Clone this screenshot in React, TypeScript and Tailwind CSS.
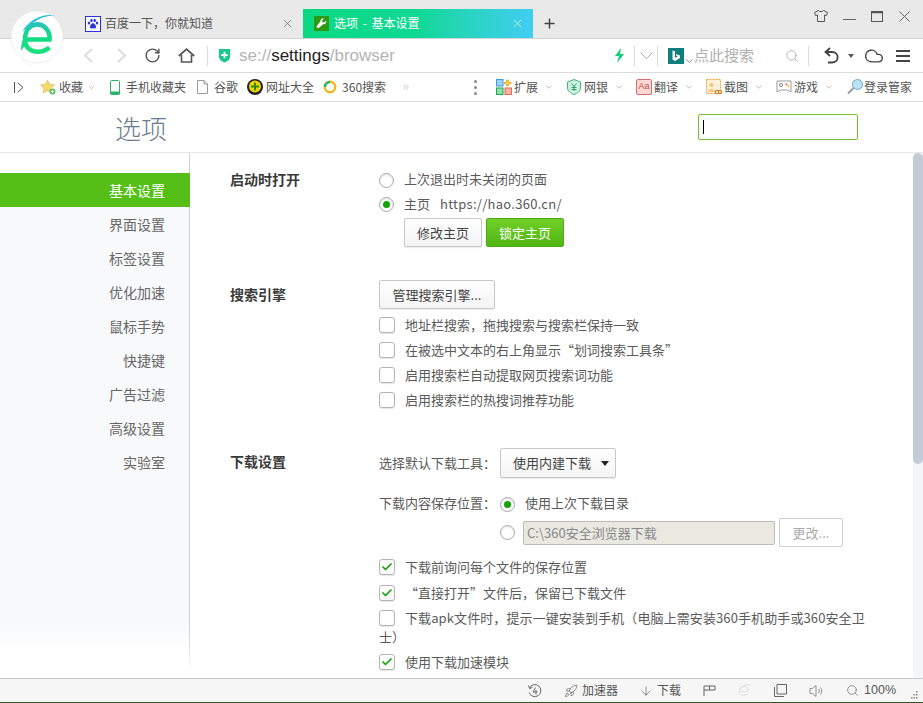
import { ChevronDown, Search, Cloud, X, Plus, Check, ArrowDown, Rocket, RotateCw, ChevronsRight } from 'lucide-react';

const SIDE_ITEMS = ['基本设置', '界面设置', '标签设置', '优化加速', '鼠标手势', '快捷键', '广告过滤', '高级设置', '实验室'];

function Logo() {
  return (
    <svg width="70" height="65" viewBox="0 0 70 65" fill="none" className="absolute left-[5px] top-[5px] z-10">
      <defs>
        <linearGradient id="egrad" x1="0" y1="0" x2="0" y2="1">
          <stop offset="0" stopColor="#27c5b4" />
          <stop offset="0.5" stopColor="#10dd84" />
          <stop offset="1" stopColor="#18e07e" />
        </linearGradient>
      </defs>
      <path d="M17 54 L25 60.5 L28 57.5 Z" fill="#fff" stroke="#e2e2e2" strokeWidth="0.5" />
      <circle cx="32" cy="32" r="26" fill="#fff" stroke="#e4e4e4" strokeWidth="0.6" />
      <path d="M22 34.5 H44.5 C45.5 25 38 18.5 31 19.5 C23 20.5 20 28 20 35 C20 43 27 47 33 46.8 C38 46.6 41.5 45 44.5 42.5" stroke="url(#egrad)" strokeWidth="4.6" />
      <path d="M17 27 C24 15 37 8 50 10.5 C40 10.5 32 14 26 20 C22 23 19 25 17 27 Z" fill="#2cc2d4" />
      <path d="M16 46 C16 39 17.5 34 20 30 L22 37 C20.5 40 18 43 16 46 Z" fill="#14dc88" />
    </svg>
  );
}

function Radio({ on }: { on?: boolean }) {
  return (
    <span className="flex h-[15px] w-[15px] shrink-0 items-center justify-center rounded-full border border-[#a8a8a8] bg-white shadow-[inset_0_1px_2px_rgba(0,0,0,0.12)]">
      {on && <span className="h-[7px] w-[7px] rounded-full bg-[#16a308]" />}
    </span>
  );
}

function CheckBox({ on }: { on?: boolean }) {
  return (
    <span className="flex h-[16px] w-[16px] shrink-0 items-center justify-center rounded-[3px] border border-[#b4b4b4] bg-white shadow-[0_1px_1px_rgba(0,0,0,0.1)]">
      {on && <Check size={12} strokeWidth={3.5} className="text-[#16a308]" />}
    </span>
  );
}

function CheckRow({ on, children }: { on?: boolean; children: React.ReactNode }) {
  return (
    <div className="flex h-[25px] items-center gap-[10px]">
      <CheckBox on={on} />
      <span>{children}</span>
    </div>
  );
}

function GrayButton({ className, children }: { className?: string; children: React.ReactNode }) {
  return (
    <div className={`flex items-center justify-center rounded-[2px] border border-[#c8c8c8] bg-gradient-to-b from-white to-[#f4f4f4] text-[#444] shadow-[0_1px_1px_rgba(0,0,0,0.08)] ${className ?? ''}`}>
      {children}
    </div>
  );
}

function Tabs() {
  return (
    <div className="relative flex h-[39px] border-b border-[#d2d2d2] bg-[#e9e9e9] pt-[9px]">
      <div className="ml-[85px] flex h-[29px] w-[218px] items-center text-[#555]">
        <span className="flex h-[16px] w-[16px] items-center justify-center border border-[#2932e1] bg-white">
          <svg width="12" height="12" viewBox="0 0 12 12" fill="#2932e1">
            <ellipse cx="2" cy="5" rx="1.2" ry="1.6" />
            <ellipse cx="4.5" cy="2.5" rx="1.2" ry="1.7" />
            <ellipse cx="7.7" cy="2.5" rx="1.2" ry="1.7" />
            <ellipse cx="10" cy="5" rx="1.2" ry="1.6" />
            <path d="M6 5.2 C4.4 5.2 2.6 8 3 9.6 C3.5 11 5 10.2 6 10.2 C7 10.2 8.5 11 9 9.6 C9.4 8 7.6 5.2 6 5.2 Z" />
          </svg>
        </span>
        <span className="ml-[4px] pb-[2px] text-[12px]">百度一下，你就知道</span>
        <X size={13} strokeWidth={1.3} className="ml-auto mr-[9px] text-[#666]" />
      </div>
      <div className="flex h-[29px] w-[230px] items-center bg-gradient-to-r from-[#0ad981] via-[#10d895] to-[#41cdf4] pl-[11px] text-white">
        <span className="flex h-[15px] w-[15px] items-center justify-center bg-[#2c9a12]">
          <svg width="11" height="11" viewBox="0 0 12 12" fill="#fff">
            <path d="M11 3 L8.8 5 L7 4.6 L6.6 2.8 L8.8 0.8 C6.8 0 4.6 1.4 4.8 3.8 L0.8 8.6 C0 9.8 1.8 11.6 3 10.8 L7.8 6.9 C10 7.2 11.8 5 11 3 Z" />
          </svg>
        </span>
        <span className="ml-[5px] pb-[2px] text-[12px] [word-spacing:2px]">选项 - 基本设置</span>
        <X size={13} strokeWidth={1.3} className="ml-auto mr-[9px]" />
      </div>
      <Plus size={15} strokeWidth={2.4} className="ml-[9px] mt-[7px] text-[#444]" />
      <div className="absolute left-[814px] top-[10px] flex items-start text-[#555]">
        <svg width="14" height="12" viewBox="0 0 14 12" fill="none" stroke="#555" strokeWidth="1">
          <path d="M4.5 0.5 C5.5 2 8.5 2 9.5 0.5 L13.5 2.5 L12.5 5.5 L10.5 5 V11.5 H3.5 V5 L1.5 5.5 L0.5 2.5 Z" />
        </svg>
        <svg width="13" height="12" viewBox="0 0 13 12" className="ml-[15px]"><path d="M0 9.5 H13" stroke="#666" strokeWidth="1" /></svg>
        <svg width="12" height="11" viewBox="0 0 12 11" fill="none" className="ml-[15px] mt-px">
          <rect x="0.5" y="0.5" width="11" height="10" stroke="#555" />
          <path d="M0 1.5 H12" stroke="#555" strokeWidth="1.5" />
        </svg>
        <svg width="11" height="11" viewBox="0 0 11 11" className="ml-[16px] mt-px"><path d="M0.5 0.5 L10.5 10.5 M10.5 0.5 L0.5 10.5" stroke="#666" strokeWidth="1" /></svg>
      </div>
    </div>
  );
}

function NavBar() {
  return (
    <div className="flex h-[34px] items-center border-b border-[#dcdcdc] bg-white">
      <svg width="10" height="15" viewBox="0 0 10 15" className="ml-[83px]"><path d="M9 1 L2 7.5 L9 14" fill="none" stroke="#dcdcdc" strokeWidth="1.8" /></svg>
      <svg width="10" height="15" viewBox="0 0 10 15" className="ml-[24px]"><path d="M1 1 L8 7.5 L1 14" fill="none" stroke="#dcdcdc" strokeWidth="1.8" /></svg>
      <RotateCw size={17} strokeWidth={2} className="ml-[17px] text-[#555]" />
      <svg width="17" height="15" viewBox="0 0 17 15" fill="none" stroke="#555" className="ml-[17px]">
        <path d="M0.8 8 L8.5 1.2 L16.2 8" strokeWidth="1.8" />
        <path d="M3.5 7 V14 H13.5 V7" strokeWidth="1.6" />
      </svg>
      <span className="ml-[12px] h-[20px] w-px bg-[#dcdcdc]" />
      <svg width="13" height="15" viewBox="0 0 14 16" className="ml-[10px]">
        <path d="M1 1 H13 V9 C13 12 10 14.5 7 15.5 C4 14.5 1 12 1 9 Z" fill="#16c889" />
        <path d="M6 4 H8 V6.5 H10.5 V8.5 H8 V11 H6 V8.5 H3.5 V6.5 H6 Z" fill="#fff" />
      </svg>
      <span className="ml-[8px] w-[156px] whitespace-nowrap font-['Liberation_Sans',sans-serif] text-[17px] text-[#b4b4b4]">
        se://<span className="text-[#222]">settings</span>/browser
      </span>
      <svg width="11" height="15" viewBox="0 0 11 15" className="ml-[219px]">
        <path d="M7 0 L1 8 H5 L3 15 L10 6 H6 Z" fill="#12cf78" />
      </svg>
      <span className="ml-[9px] h-[20px] w-px bg-[#dcdcdc]" />
      <svg width="13" height="8" viewBox="0 0 13 8" className="ml-[5px]"><path d="M0.5 0.5 L6.5 6.5 L12.5 0.5" fill="none" stroke="#aaa" /></svg>
      <span className="ml-[4px] h-[20px] w-px bg-[#dcdcdc]" />
      <svg width="16" height="16" viewBox="0 0 16 16" className="ml-[10px]">
        <rect width="16" height="16" fill="#0f7f7d" />
        <path d="M4.5 2.5 L7 3.3 V9.8 L9.8 8.4 L8.4 7.7 L7.8 6 L12 7.5 V10 L7 13 L4.5 11.6 Z" fill="#fff" />
      </svg>
      <svg width="7" height="4" viewBox="0 0 7 4" className="ml-[2px] mt-[11px]"><path d="M0.5 0.5 L3.5 3.5 L6.5 0.5" fill="none" stroke="#999" /></svg>
      <span className="ml-px w-[60px] text-[15px] text-[#b0b0b0]">点此搜索</span>
      <Search size={14} strokeWidth={1.2} className="ml-[31px] text-[#999]" />
      <span className="ml-[9px] h-[20px] w-px bg-[#dcdcdc]" />
      <svg width="15" height="17" viewBox="0 0 15 17" fill="none" stroke="#444" strokeWidth="1.8" className="ml-[15px]">
        <path d="M1.5 5 H8 C15.5 5 15.5 15.5 8 15.5 H4" />
        <path d="M6 1 L1.5 5 L6 9" />
      </svg>
      <svg width="6" height="4" viewBox="0 0 6 4" className="ml-[9px]"><path d="M0 0 H6 L3 4 Z" fill="#555" /></svg>
      <Cloud size={20} strokeWidth={1.7} className="ml-[10px] text-[#444]" />
      <svg width="14" height="12" viewBox="0 0 14 12" className="ml-[12px]"><path d="M0 1 H14 M0 6 H14 M0 11 H14" stroke="#444" strokeWidth="2" /></svg>
    </div>
  );
}

function ExtTool({ icon, label, last }: { icon: React.ReactNode; label: string; last?: boolean }) {
  return (
    <div className="flex w-[70px] shrink-0 items-center">
      {icon}
      <span className={`whitespace-nowrap ${last ? '' : 'ml-[2px]'}`}>{label}</span>
      {!last && <ChevronDown size={10} strokeWidth={1} className="ml-[6px] text-[#666]" />}
    </div>
  );
}

function Bookmarks() {
  return (
    <div className="flex h-[29px] items-center border-b border-[#dcdcdc] bg-white text-[12px] text-[#555]">
      <div className="flex w-[474px] shrink-0 items-center">
        <svg width="10" height="11" viewBox="0 0 10 11" fill="none" stroke="#555" className="ml-[14px]"><path d="M0.5 0 V11 M4 1 L9 5.5 L4 10" /></svg>
        <svg width="16" height="16" viewBox="0 0 16 16" className="ml-[16px]">
          <path d="M7.5 1 L9.6 5.4 L14.5 6 L11 9.3 L11.9 14 L7.5 11.7 L3.1 14 L4 9.3 L0.5 6 L5.4 5.4 Z" fill="#f7d86b" stroke="#d3b04a" strokeWidth="0.6" />
          <circle cx="12.5" cy="12.5" r="3" fill="#62c26a" />
          <path d="M12.5 11 V14 M11 12.5 H14" stroke="#fff" strokeWidth="0.8" />
        </svg>
        <span className="ml-[3px]">收藏</span>
        <ChevronDown size={9} strokeWidth={1} className="ml-[4px] text-[#666]" />
        <svg width="10" height="15" viewBox="0 0 10 15" className="ml-[14px]">
          <rect x="0.5" y="0.5" width="9" height="14" rx="1" fill="#fff" stroke="#2cb36a" />
          <rect x="0.5" y="11.5" width="9" height="3" fill="#2cb36a" />
        </svg>
        <span className="ml-[6px]">手机收藏夹</span>
        <svg width="11" height="14" viewBox="0 0 11 14" fill="none" stroke="#999" className="ml-[11px]"><path d="M0.5 0.5 H7 L10.5 4 V13.5 H0.5 Z M7 0.5 V4 H10.5" /></svg>
        <span className="ml-[6px]">谷歌</span>
        <svg width="16" height="16" viewBox="0 0 16 16" className="ml-[9px]">
          <circle cx="8" cy="8" r="8" fill="#222" />
          <circle cx="8" cy="7.5" r="6" fill="#f2d500" />
          <path d="M7 3.5 H9 V6.5 H12 V8.5 H9 V11.5 H7 V8.5 H4 V6.5 H7 Z" fill="#2f8a12" />
        </svg>
        <span className="ml-[3px]">网址大全</span>
        <svg width="14" height="14" viewBox="0 0 14 14" className="ml-[9px]">
          <circle cx="7" cy="7" r="5.2" fill="none" stroke="#f0b81c" strokeWidth="2.4" />
          <path d="M2 7 A5 5 0 0 1 7 2" fill="none" stroke="#2fb866" strokeWidth="2.4" />
        </svg>
        <span className="ml-[5px]">360搜索</span>
        <ChevronsRight size={10} strokeWidth={1} className="ml-[15px] text-[#777]" />
      </div>
      <span className="flex flex-col gap-[3px]">
        <span className="h-[3px] w-[3px] rounded-full bg-[#888]" />
        <span className="h-[3px] w-[3px] rounded-full bg-[#888]" />
        <span className="h-[3px] w-[3px] rounded-full bg-[#888]" />
      </span>
      <div className="ml-[19px] flex items-center">
        <ExtTool
          label="扩展"
          icon={
            <svg width="16" height="16" viewBox="0 0 16 16">
              <rect x="0.5" y="0.5" width="6.5" height="6.5" fill="#9ad4f7" stroke="#3a9be0" />
              <rect x="0.5" y="9" width="6.5" height="6.5" fill="#8fe0a8" stroke="#1da55a" />
              <rect x="9" y="9" width="6.5" height="6.5" fill="#f7b3a8" stroke="#e46a52" />
              <path d="M10.5 1 H12.5 V3 H15 V5 H12.5 V7 H10.5 V5 H8.5 V3 H10.5 Z" fill="#f9d24a" stroke="#d49a10" strokeWidth="0.6" />
            </svg>
          }
        />
        <ExtTool
          label="网银"
          icon={
            <svg width="16" height="16" viewBox="0 0 16 16">
              <path d="M8 0.5 L14.5 3 V9 C14.5 12 11 14.5 8 15.5 C5 14.5 1.5 12 1.5 9 V3 Z" fill="#cdf1de" stroke="#3cb57f" />
              <path d="M5.5 4.5 L8 7.5 L10.5 4.5 M8 7.5 V12 M5.5 8.5 H10.5 M5.5 10.5 H10.5" stroke="#1f9a62" strokeWidth="0.9" fill="none" />
            </svg>
          }
        />
        <ExtTool
          label="翻译"
          icon={
            <span className="flex h-[16px] w-[16px] items-center justify-center rounded-[2px] border border-[#d76a6a] bg-[#fbd9d6] font-['Liberation_Sans',sans-serif] text-[9px] text-[#c44]">Aa</span>
          }
        />
        <ExtTool
          label="截图"
          icon={
            <svg width="16" height="16" viewBox="0 0 16 16">
              <rect x="0.5" y="0.5" width="14" height="14" fill="#fdf0d8" stroke="#efa53a" strokeDasharray="2 1" />
              <circle cx="5.5" cy="6" r="2" fill="#f2c37a" />
              <path d="M2 13 C3 9 8 9 9 13 Z" fill="#f2c37a" />
              <circle cx="11" cy="13" r="1.8" fill="none" stroke="#c9751a" />
              <circle cx="14" cy="13" r="1.8" fill="none" stroke="#c9751a" />
            </svg>
          }
        />
        <ExtTool
          label="游戏"
          icon={
            <svg width="16" height="16" viewBox="0 0 16 16">
              <path d="M1 2 H15 V13 L11.5 11 H4.5 L1 13 Z" fill="#fff" stroke="#999" />
              <circle cx="5" cy="6" r="1.6" fill="none" stroke="#888" />
              <rect x="9.5" y="4.5" width="1.8" height="1.8" fill="#e25a4a" />
              <rect x="11.5" y="6.5" width="1.8" height="1.8" fill="#f0b81c" />
            </svg>
          }
        />
        <ExtTool
          last
          label="登录管家"
          icon={
            <svg width="18" height="18" viewBox="0 0 18 18">
              <circle cx="11.5" cy="6.5" r="5" fill="#bfe1f5" stroke="#6aa9cf" />
              <path d="M7.5 10 L2 15.5" stroke="#999" strokeWidth="2" />
            </svg>
          }
        />
      </div>
    </div>
  );
}

function StatusBar() {
  return (
    <div className="flex h-[25px] items-center border-t border-b border-t-[#c8c8c8] border-b-[#2c5a22] bg-[#f6f6f6] text-[12px] text-[#555]">
      <svg width="14" height="14" viewBox="0 0 14 14" fill="none" stroke="#555" strokeWidth="0.9" className="ml-[528px]">
        <path d="M1.5 4 A6 6 0 1 1 1.2 8.5" />
        <path d="M0.5 1.5 L1.5 4.5 L4.5 3.5" />
        <path d="M7.5 3.5 L5 8 H9.5 M8 6 V10.5" />
      </svg>
      <Rocket size={14} strokeWidth={1.1} className="ml-[22px] text-[#555]" />
      <span className="ml-[4px] pb-[2px]">加速器</span>
      <ArrowDown size={14} strokeWidth={1.1} className="ml-[21px] text-[#555]" />
      <span className="ml-[4px] pb-[2px]">下载</span>
      <svg width="13" height="11" viewBox="0 0 13 11" fill="none" stroke="#555" strokeWidth="0.9" className="ml-[22px]">
        <path d="M1 11 V1 H12 V5 H6.5 V1 M1 5 H6.5" />
      </svg>
      <svg width="14" height="14" viewBox="0 0 14 14" fill="none" stroke="#dedede" strokeWidth="1" className="ml-[21px]">
        <path d="M2 7.5 H11 C11.5 4 9 2 6.5 2.5 C3.5 3 2 6 2 8 C2.5 11 6 12.5 10.5 10" />
        <path d="M2 5 C5 2 9 0.5 13 1" />
      </svg>
      <svg width="13" height="13" viewBox="0 0 13 13" fill="none" stroke="#555" strokeWidth="0.9" className="ml-[23px]">
        <path d="M3 0.5 H12.5 V10 H3 Z M0.5 3 V12.5 H10" />
      </svg>
      <svg width="14" height="14" viewBox="0 0 14 14" fill="none" stroke="#888" strokeWidth="0.9" className="ml-[22px]">
        <path d="M1 4.5 H3.5 L7 1.5 V12.5 L3.5 9.5 H1 Z M9.5 5 C10.5 6 10.5 8 9.5 9 M11.5 3.5 C13 5.5 13 8.5 11.5 10.5" />
      </svg>
      <Search size={13} strokeWidth={1.1} className="ml-[23px] text-[#555]" />
      <span className="ml-[5px] font-['Liberation_Sans',sans-serif] text-[12.5px]">100%</span>
      <svg width="8" height="8" viewBox="0 0 8 8" fill="#888" className="ml-[15px] mt-[9px]">
        <rect x="5" y="0" width="1.5" height="1.5" />
        <rect x="2.5" y="3" width="1.5" height="1.5" />
        <rect x="5" y="3" width="1.5" height="1.5" />
        <rect x="0" y="6" width="1.5" height="1.5" />
        <rect x="2.5" y="6" width="1.5" height="1.5" />
        <rect x="5" y="6" width="1.5" height="1.5" />
      </svg>
    </div>
  );
}

function Sidebar() {
  return (
    <div className="flex w-[190px] shrink-0">
      <div className="h-full w-[189px] bg-[linear-gradient(to_bottom,#ffffff_3.8%,#f8f9fb_3.8%,#f8f9fb_89%,#ffffff_96%)] pt-[20px] text-[14px]">
        {SIDE_ITEMS.map((item, i) => (
          <div
            key={item}
            className={`relative flex h-[34px] items-center justify-end pr-[24px] ${i === 0 ? '-mr-px bg-[#55bf17] pr-[25px] text-white' : 'text-[#666]'}`}
          >
            {item}
          </div>
        ))}
      </div>
      <div className="h-[519px] w-px bg-[linear-gradient(to_bottom,#d0d0d0_92%,#ffffff)]" />
    </div>
  );
}

function Settings() {
  return (
    <div className="relative flex-1 overflow-hidden bg-white pl-[40px] pt-[16px] text-[13px] text-[#5a5a5a]">
      <div className="flex">
        <div className="flex h-[22px] w-[149px] items-center pb-[2px] text-[14px] font-bold text-[#3a3a3a]">启动时打开</div>
        <div>
          <div className="flex h-[22px] items-center gap-[10px]"><Radio /><span className="pb-[2px]">上次退出时未关闭的页面</span></div>
          <div className="mt-[2px] flex h-[22px] items-center gap-[10px]">
            <Radio on />
            <span>主页</span>
            <span className="tracking-[0.27px]">https://hao.360.cn/</span>
          </div>
          <div className="ml-[25px] mt-[3px] flex gap-[4px]">
            <GrayButton className="h-[29px] w-[78px]">修改主页</GrayButton>
            <div className="flex h-[29px] w-[78px] items-center justify-center rounded-[2px] border border-[#4ea916] bg-gradient-to-b from-[#6fd028] to-[#52b510] text-white">锁定主页</div>
          </div>
        </div>
      </div>

      <div className="mt-[33px] flex">
        <div className="flex h-[29px] w-[149px] items-center text-[14px] font-bold text-[#3a3a3a]">搜索引擎</div>
        <div>
          <GrayButton className="h-[29px] w-[116px]">管理搜索引擎...</GrayButton>
          <div className="mt-[3px]">
            <CheckRow>地址栏搜索，拖拽搜索与搜索栏保持一致</CheckRow>
            <CheckRow>在被选中文本的右上角显示“划词搜索工具条”</CheckRow>
            <CheckRow>启用搜索栏自动提取网页搜索词功能</CheckRow>
            <CheckRow>启用搜索栏的热搜词推荐功能</CheckRow>
          </div>
        </div>
      </div>

      <div className="mt-[36px] flex">
        <div className="flex h-[29px] w-[149px] items-center pb-[2px] text-[14px] font-bold text-[#3a3a3a]">下载设置</div>
        <div className="w-[490px]">
          <div className="flex items-center">
            <span className="w-[121px]">选择默认下载工具：</span>
            <GrayButton className="h-[30px] w-[116px] !justify-start pl-[12px]">
              使用内建下载
              <svg width="8" height="5" viewBox="0 0 8 5" className="ml-[10px]"><path d="M0 0 H8 L4 5 Z" fill="#222" /></svg>
            </GrayButton>
          </div>
          <div className="mt-[15px] flex h-[22px] items-center">
            <span className="w-[121px] pb-[2px]">下载内容保存位置：</span>
            <Radio on />
            <span className="ml-[10px] pb-[2px]">使用上次下载目录</span>
          </div>
          <div className="mt-[3px] flex h-[29px] items-center pl-[121px]">
            <Radio />
            <div className="ml-[8px] flex h-[24px] w-[252px] items-center rounded-[2px] border border-[#bcbcbc] bg-[#e9e9e2] pl-[3px] text-[#888]">C:\360安全浏览器下载</div>
            <div className="ml-[4px] flex h-[29px] w-[64px] items-center justify-center rounded-[2px] border border-[#cfcfcf] text-[#aaa]">更改...</div>
          </div>
          <div className="mt-[7px]">
            <CheckRow on>下载前询问每个文件的保存位置</CheckRow>
            <div className="mt-px">
              <CheckRow on>“直接打开”文件后，保留已下载文件</CheckRow>
            </div>
            <div className="mt-[3px] flex flex-wrap items-start leading-[19px] tracking-[0.1px]">
              <p className="indent-[26px]">
                下载apk文件时，提示一键安装到手机（电脑上需安装360手机助手或360安全卫士）
              </p>
              <span className="absolute mt-[2px]"><CheckBox /></span>
            </div>
            <div className="mt-[3px]">
              <CheckRow on>使用下载加速模块</CheckRow>
            </div>
          </div>
        </div>
      </div>

      <div className="absolute right-0 top-0 h-full w-[10px] bg-[#f4f5f7]">
        <div className="h-[311px] rounded-[5px] bg-[#c3cbd6]" />
      </div>
    </div>
  );
}

export default function App() {
  return (
    <div className="relative h-[703px] w-[923px] overflow-hidden bg-white font-['Noto_Sans_CJK_SC','Noto_Sans',sans-serif] text-[12px]">
      <Logo />
      <Tabs />
      <NavBar />
      <Bookmarks />
      <div className="flex h-[51px] items-center border-b border-[#e8e8e8] bg-white">
        <span className="ml-[115px] text-[26px] font-light text-[#6b7c8e]">选项</span>
        <div className="ml-auto mr-[65px] flex h-[26px] w-[160px] items-center rounded-[2px] border border-[#74c02e] pl-[4px]">
          <span className="h-[14px] w-px bg-black" />
        </div>
      </div>
      <div className="flex h-[525px]">
        <Sidebar />
        <Settings />
      </div>
      <StatusBar />
    </div>
  );
}
